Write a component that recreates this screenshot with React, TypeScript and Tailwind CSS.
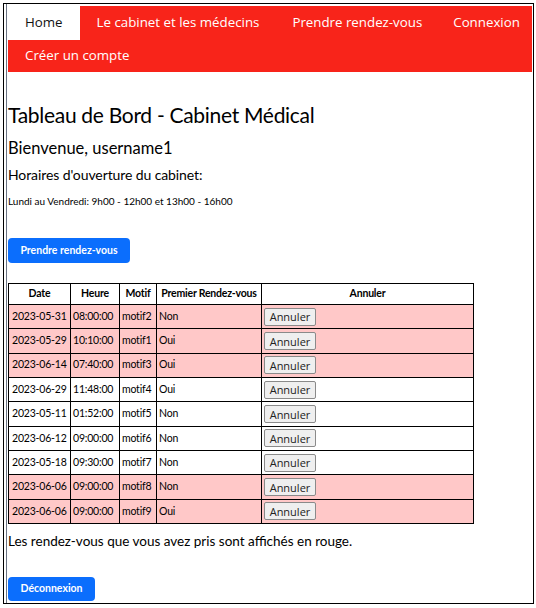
const rdv = [
  { date: "2023-05-31", heure: "08:00:00", motif: "motif2", premier: "Non", mine: true },
  { date: "2023-05-29", heure: "10:10:00", motif: "motif1", premier: "Oui", mine: true },
  { date: "2023-06-14", heure: "07:40:00", motif: "motif3", premier: "Oui", mine: true },
  { date: "2023-06-29", heure: "11:48:00", motif: "motif4", premier: "Oui", mine: false },
  { date: "2023-05-11", heure: "01:52:00", motif: "motif5", premier: "Non", mine: false },
  { date: "2023-06-12", heure: "09:00:00", motif: "motif6", premier: "Non", mine: false },
  { date: "2023-05-18", heure: "09:30:00", motif: "motif7", premier: "Non", mine: false },
  { date: "2023-06-06", heure: "09:00:00", motif: "motif8", premier: "Non", mine: true },
  { date: "2023-06-06", heure: "09:00:00", motif: "motif9", premier: "Oui", mine: true },
];

const navFont = { fontFamily: '"Open Sans", "DejaVu Sans", sans-serif' };

function Nav() {
  return (
    <nav className="bg-[#f8241a] text-[13.3px] text-white" style={navFont}>
      <div className="flex h-[34px] whitespace-nowrap">
        <a className="flex items-center bg-white px-[17px] text-[#111]">Home</a>
        <a className="flex items-center px-[17px]">Le cabinet et les médecins</a>
        <a className="flex items-center px-[16px]">Prendre rendez-vous</a>
        <a className="flex items-center px-[15px]">Connexion</a>
      </div>
      <div className="flex h-[32px]">
        <a className="flex items-center px-[17px]">Créer un compte</a>
      </div>
    </nav>
  );
}

export default function App() {
  return (
    <div className="min-h-[608px] bg-white" style={{ fontFamily: "Lato, sans-serif" }}>
      <div className="ml-[3px] mt-[3px] h-[601px] w-[531px] border border-black">
        <div className="ml-[2px] h-full border-l border-gray-500 pl-[1px] pr-[1px] pt-[2px]">
          <Nav />
          <h1 className="mt-[29px] text-[21px] leading-[28px] tracking-[-0.3px] text-black">
            Tableau de Bord - Cabinet Médical
          </h1>
          <h2 className="mt-[9px] text-[16.5px] leading-[20px] text-black">Bienvenue, username1</h2>
          <h3 className="mt-[8px] text-[14px] leading-[18px] tracking-[-0.1px] text-black">
            Horaires d'ouverture du cabinet:
          </h3>
          <p className="mt-[11px] text-[10px] leading-[12px] text-black">
            Lundi au Vendredi: 9h00 - 12h00 et 13h00 - 16h00
          </p>
          <button className="mt-[31px] block h-[25px] w-[122px] rounded-[4px] bg-[#0b6efd] text-[10.5px] font-bold text-white">
            Prendre rendez-vous
          </button>
          <table className="mt-[20px] w-[466px] table-fixed border-collapse border border-black text-[10.5px] tracking-[-0.2px] text-black">
            <colgroup>
              <col className="w-[62px]" />
              <col className="w-[49px]" />
              <col className="w-[37px]" />
              <col className="w-[105px]" />
              <col />
            </colgroup>
            <thead>
              <tr className="h-[21px]">
                {["Date", "Heure", "Motif", "Premier Rendez-vous", "Annuler"].map((h) => (
                  <th key={h} className="whitespace-nowrap border border-black px-[1px] text-center font-bold">
                    {h}
                  </th>
                ))}
              </tr>
            </thead>
            <tbody>
              {rdv.map((r, i) => (
                <tr key={i} className={r.mine ? "h-[24.35px] bg-[#ffc8c8]" : "h-[24.35px] bg-white"}>
                  <td className="whitespace-nowrap border border-black px-[3px]">{r.date}</td>
                  <td className="whitespace-nowrap border border-black px-[2px]">{r.heure}</td>
                  <td className="border border-black px-[2px]">{r.motif}</td>
                  <td className="border border-black px-[2px]">{r.premier}</td>
                  <td className="border border-black px-[2px]">
                    <button
                      className="block h-[18px] w-[52px] rounded-[2px] border border-[#8a8a8a] bg-[#efefef] text-[11px] leading-none tracking-normal text-[#222]"
                      style={navFont}
                    >
                      Annuler
                    </button>
                  </td>
                </tr>
              ))}
            </tbody>
          </table>
          <p className="mt-[8px] text-[13.5px] leading-[18px] text-black">
            Les rendez-vous que vous avez pris sont affichés en rouge.
          </p>
          <button className="mt-[27px] block h-[24px] w-[87px] rounded-[4px] bg-[#0b6efd] text-[10.5px] font-bold text-white">
            Déconnexion
          </button>
        </div>
      </div>
    </div>
  );
}
